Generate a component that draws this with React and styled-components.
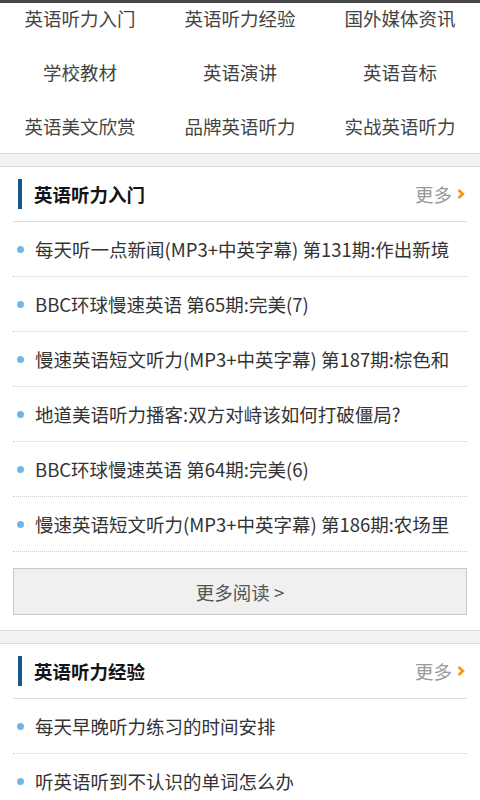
import React from "react";
import styled, { createGlobalStyle } from "styled-components";

const GlobalStyle = createGlobalStyle`
  html, body {
    margin: 0;
    padding: 0;
    background: #fff;
    font-family: "Noto Sans CJK SC", "Noto Sans", sans-serif;
  }
  * {
    box-sizing: border-box;
  }
`;

const Page = styled.div`
  width: 480px;
  height: 800px;
  overflow: hidden;
  background: #fff;
`;

const StatusEdge = styled.div`
  position: fixed;
  top: 0;
  left: 0;
  width: 480px;
  height: 3px;
  background: #474747;
  z-index: 2;
`;

const NavGrid = styled.div`
  display: grid;
  grid-template-columns: repeat(3, 1fr);
  grid-auto-rows: 54px;
  margin-top: -9px;
`;

const NavItem = styled.a`
  display: flex;
  align-items: center;
  justify-content: center;
  font-size: 18.5px;
  color: #444;
  text-decoration: none;
`;

const Divider = styled.div`
  height: 14px;
  background: #f2f2f2;
  border-top: 1px solid #dcdcdc;
  border-bottom: 1px solid #dcdcdc;
`;

const Section = styled.section`
  padding: 0 13px 15px;
`;

const SectionHeader = styled.div`
  height: 55px;
  display: flex;
  align-items: center;
  padding-left: 5px;
  border-bottom: 1px solid #dddddd;
`;

const Accent = styled.span`
  width: 4px;
  height: 30px;
  background: #16578a;
  margin-right: 12px;
`;

const Title = styled.h3`
  flex: 1;
  margin: 0;
  font-size: 18.5px;
  font-weight: 700;
  color: #151515;
`;

const More = styled.a`
  display: flex;
  align-items: center;
  gap: 5px;
  font-size: 18.5px;
  color: #9a9a9a;
  text-decoration: none;
  padding-right: 2px;
`;

const List = styled.ul`
  list-style: none;
  margin: 0;
  padding: 0;
`;

const Item = styled.li`
  height: 55px;
  display: flex;
  align-items: center;
  padding: 0 12px 0 4px;
  border-bottom: 1px dotted #cfcfcf;
`;

const Dot = styled.span`
  flex: none;
  width: 7px;
  height: 7px;
  border-radius: 50%;
  background: #72b5e6;
  margin-right: 11px;
`;

const ItemText = styled.span`
  font-size: 18.5px;
  color: #333;
  white-space: nowrap;
  overflow: hidden;
`;

const ReadMore = styled.button`
  display: block;
  width: 100%;
  height: 47px;
  margin-top: 16px;
  background: #f0f0f0;
  border: 1px solid #c9c9c9;
  font-family: inherit;
  font-size: 18.5px;
  color: #555;
`;

const Chevron = () => (
  <svg width="8" height="12" viewBox="0 0 8 12">
    <path d="M1.5 2 L5.8 6 L1.5 10" fill="none" stroke="#f39a12" strokeWidth="2.8" />
  </svg>
);

const navs = [
  "英语听力入门", "英语听力经验", "国外媒体资讯",
  "学校教材", "英语演讲", "英语音标",
  "英语美文欣赏", "品牌英语听力", "实战英语听力",
];

const sections = [
  {
    title: "英语听力入门",
    items: [
      "每天听一点新闻(MP3+中英字幕) 第131期:作出新境",
      "BBC环球慢速英语 第65期:完美(7)",
      "慢速英语短文听力(MP3+中英字幕) 第187期:棕色和",
      "地道美语听力播客:双方对峙该如何打破僵局?",
      "BBC环球慢速英语 第64期:完美(6)",
      "慢速英语短文听力(MP3+中英字幕) 第186期:农场里",
    ],
    more: true,
  },
  {
    title: "英语听力经验",
    items: ["每天早晚听力练习的时间安排", "听英语听到不认识的单词怎么办"],
  },
];

const App = () => {
  return (
    <Page>
      <GlobalStyle />
      <StatusEdge />
      <NavGrid>
        {navs.map((n) => (
          <NavItem key={n}>{n}</NavItem>
        ))}
      </NavGrid>
      {sections.map((s) => (
        <React.Fragment key={s.title}>
          <Divider />
          <Section>
            <SectionHeader>
              <Accent />
              <Title>{s.title}</Title>
              <More>
                更多
                <Chevron />
              </More>
            </SectionHeader>
            <List>
              {s.items.map((t) => (
                <Item key={t}>
                  <Dot />
                  <ItemText>{t}</ItemText>
                </Item>
              ))}
            </List>
            {s.more && <ReadMore>更多阅读 &gt;</ReadMore>}
          </Section>
        </React.Fragment>
      ))}
    </Page>
  );
};

export default App;
